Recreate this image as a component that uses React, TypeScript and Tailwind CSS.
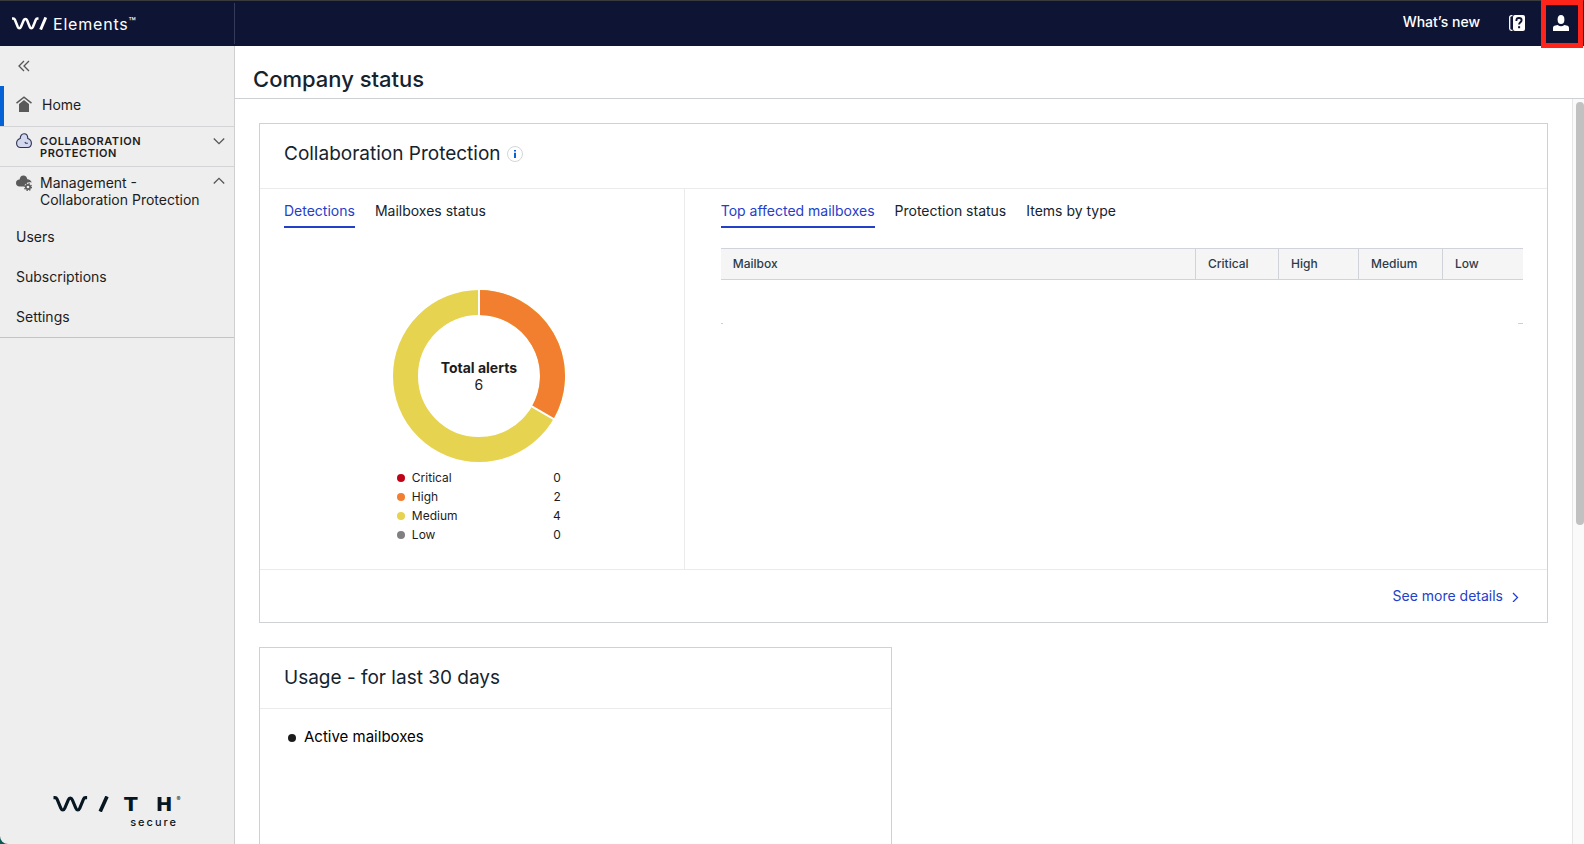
import React from "react";

const sidebarLinks = ["Users", "Subscriptions", "Settings"];

const severities = [
  { label: "Critical", count: 0, dot: "bg-[#c00418]" },
  { label: "High", count: 2, dot: "bg-[#f27f30]" },
  { label: "Medium", count: 4, dot: "bg-[#e6d34f]" },
  { label: "Low", count: 0, dot: "bg-[#808080]" },
];

function BrandMark({ className }: { className: string }) {
  return (
    <svg viewBox="0 0 56 16" className={className} fill="none" stroke="currentColor" strokeWidth="3.100" aria-hidden="true">
      <path d="M.5 1.600h1.400c1.100 0 1.700.5 2.200 1.500L7.800 12.200c1 2.400 3 2.400 4 0l3.500-8.400c.9-2.300 3.100-2.300 4 0l3.500 8.400c1 2.400 3 2.400 4 0l3.700-9.100c.4-1 1-1.500 2.100-1.500h1.500" />
      <path d="M54 .4 47.200 15.600" strokeWidth="3.600" />
    </svg>
  );
}

function HeaderMark() {
  return (
    <svg viewBox="0 0 36 13" className="h-[13px] w-9 text-white" fill="none" stroke="currentColor" strokeWidth="2.500" aria-hidden="true">
      <path d="M0 1.500h1.200c.9 0 1.400.4 1.700 1.200L5.700 9.800c.8 1.900 2.500 1.900 3.300 0l2.700-6.500c.8-1.900 2.600-1.900 3.400 0l2.600 6.500c.8 1.900 2.500 1.900 3.300 0L23.800 2.700c.3-.8.8-1.200 1.700-1.200h1" />
      <path d="M33.800.4 28.600 12.600" strokeWidth="2.900" />
    </svg>
  );
}

function Chevron({ d, className }: { d: string; className: string }) {
  return (
    <svg viewBox="0 0 12 12" className={className} fill="none" stroke="currentColor" strokeWidth="1.300" aria-hidden="true">
      <path d={d} />
    </svg>
  );
}

function TopBar() {
  return (
    <header className="flex h-[46px] shrink-0 border-t border-[#3a3a3c] bg-[#0e1433] text-white">
      <a href="#home" className="flex w-[234px] shrink-0 items-center gap-[5px] pl-3" aria-label="Elements home">
        <HeaderMark />
        <span className="flex items-start text-base leading-5 tracking-wider">
          Elements<span className="text-xs leading-4 tracking-normal">™</span>
        </span>
      </a>
      <div className="my-[2px] w-px bg-[#343a5c]" />
      <div className="flex flex-1 items-center justify-end">
        <a href="#news" className="mr-[29px] pb-1 text-sm font-medium">What’s new</a>
        <button type="button" aria-label="Help" className="mr-4 pb-px">
          <svg viewBox="0 0 16 16" className="size-4" aria-hidden="true">
            <path d="M3.500.7H2.400C1.400.7.700 1.400.7 2.400v11.200c0 1 .7 1.700 1.700 1.700h1.100" fill="none" stroke="#fff" strokeWidth="1.300" />
            <rect x="4" y="0" width="12" height="16" rx="2" fill="#fff" />
            <path d="M7.400 6V5.400c0-1.500 1.100-2.400 2.600-2.400s2.600.9 2.600 2.300c0 2-2.500 2-2.500 4.300" fill="none" stroke="#0e1433" strokeWidth="1.900" />
            <rect x="9.100" y="11.200" width="2" height="2" fill="#0e1433" />
          </svg>
        </button>
        <button type="button" aria-label="Account" className="relative mr-px flex h-full w-[42px] items-center justify-center pr-[2px] pb-px">
          <svg viewBox="0 0 16 16" className="size-4" fill="#fff" aria-hidden="true">
            <ellipse cx="8" cy="4.500" rx="3.400" ry="4.500" />
            <path d="M0 16v-2.800c0-1.600.9-2.300 2.400-2.600l2.300-.5c1.900 1.600 4.700 1.600 6.600 0l2.300.5c1.500.3 2.400 1 2.400 2.600V16z" />
          </svg>
          <span className="absolute inset-x-0 -top-px -bottom-[2px] border-[5px] border-[#ff2419]" />
        </button>
      </div>
    </header>
  );
}

function Sidebar() {
  return (
    <nav className="flex w-[235px] shrink-0 flex-col rounded-bl-[8px] border-r border-[#cfcfd2] bg-[#eeeeee] text-sm text-[#1c1c1c]">
      <button type="button" aria-label="Collapse menu" className="flex h-10 items-center pl-[18px] text-[#555555]">
        <svg viewBox="0 0 12 12" className="size-3" fill="none" stroke="currentColor" strokeWidth="1.300" aria-hidden="true">
          <path d="M6 1 1 6l5 5M11 1 6 6l5 5" />
        </svg>
      </button>
      <a href="#home" className="flex h-10 items-center gap-[10px] border-l-4 border-[#0562d6] pb-[2px] pl-3">
        <svg viewBox="0 0 16 18" className="h-[18px] w-4 text-[#5a5a5a]" aria-hidden="true">
          <path d="M.5 7.200 8 1.200l7.500 6" fill="none" stroke="currentColor" strokeWidth="1.500" />
          <path d="M8 4 13 8v8H3V8z" fill="currentColor" />
        </svg>
        Home
      </a>
      <button type="button" className="flex h-10 items-start border-t border-[#d4d4d6] pt-[6px] pr-[9px] pl-4 text-left">
        <svg viewBox="0 0 16 16" className="size-4 shrink-0" fill="#d3d8ee" stroke="#2c3250" strokeWidth="1.100" aria-hidden="true">
          <path d="M4.200 5.600C4.200 2.700 5.800.8 8 .8s3.800 1.900 3.800 4.800c2.200.7 3.600 2.300 3.600 4.700 0 2.600-1.600 4.200-4 4.200H4.600c-2.400 0-4-1.600-4-4.200 0-2.400 1.400-4 3.600-4.700z" />
          <path d="M8.800 9.200l1 1.100h2" fill="none" />
        </svg>
        <span className="ml-2 flex-1 pt-[2px] text-[11px] leading-3 font-semibold tracking-wider">COLLABORATION PROTECTION</span>
        <Chevron d="M.8 3.500 6 8.700l5.200-5.200" className="mt-[2px] size-3 text-[#555555]" />
      </button>
      <button type="button" className="flex h-[51px] items-start border-t border-[#d4d4d6] pt-[7px] pr-[9px] pl-4 text-left">
        <svg viewBox="0 0 16 16" className="mt-px size-4 shrink-0 text-[#5a5a5a]" aria-hidden="true">
          <path d="M3.600 4.500C3.800 2 5.300.4 7.400.4s3.700 1.600 3.900 3.800c2.300 0 3.900 1.400 4.400 3.400-3-1.300-6.800.2-7.700 4H3.600C1.400 11.600 0 10 0 8s1.400-3.500 3.600-3.500z" fill="currentColor" />
          <circle cx="12" cy="12" r="2.200" fill="none" stroke="currentColor" strokeWidth="1.700" />
          <circle cx="12" cy="12" r="3.500" fill="none" stroke="currentColor" strokeWidth="1.200" strokeDasharray="1.380 1.380" />
        </svg>
        <span className="ml-2 flex-1 leading-[17px]">Management - Collaboration Protection</span>
        <Chevron d="M.8 8.500 6 3.300l5.200 5.200" className="mt-px size-3 text-[#555555]" />
      </button>
      <ul className="border-b border-[#c4c4c6]">
        {sidebarLinks.map((link) => (
          <li key={link}>
            <a href={`#${link.toLowerCase()}`} className="flex h-10 items-center pl-4">{link}</a>
          </li>
        ))}
      </ul>
      <div className="mt-auto mb-[14px] ml-[53px] w-[131px] text-[#071722]">
        <div className="flex items-start">
          <BrandMark className="h-4 w-14" />
          <span className="ml-[15px] text-xl leading-4 font-bold [font-family:'DejaVu_Sans',sans-serif]">T</span>
          <span className="ml-[18px] text-xl leading-4 font-bold [font-family:'DejaVu_Sans',sans-serif]">H</span>
          <span className="ml-1 text-[6px] leading-[6px]">®</span>
        </div>
        <div className="mt-[2px] pr-[6px] text-right text-[11px] leading-4 font-medium tracking-[2px]">secure</div>
      </div>
    </nav>
  );
}

function Tabs({ label, items }: { label: string; items: string[] }) {
  return (
    <div role="tablist" aria-label={label} className="flex h-[39px] gap-5 text-sm">
      {items.map((item, i) => (
        <button
          key={item}
          type="button"
          role="tab"
          aria-selected={i === 0}
          className={
            i === 0
              ? "border-b-2 border-[#2540c8] pt-[7px] text-[#2540c8]"
              : "border-b-2 border-transparent pt-[7px] text-[#14232e]"
          }
        >
          {item}
        </button>
      ))}
    </div>
  );
}

function AlertsDonut() {
  return (
    <div className="mx-auto mt-[62px] w-[172px]">
      <div className="grid place-items-center">
        <svg viewBox="0 0 172 172" className="col-start-1 row-start-1 size-[172px]" fill="none" strokeWidth="25" aria-hidden="true">
          <circle cx="86" cy="86" r="73.500" stroke="#e6d34f" />
          <path d="M86 12.500A73.500 73.500 0 0 1 149.650 122.750" stroke="#f27f30" />
          <path d="M86 0v27M137.500 115.700l25 14.500" stroke="#fff" strokeWidth="2" />
        </svg>
        <div className="col-start-1 row-start-1 text-center text-sm leading-[17px] text-[#1c1c1c]">
          <div className="font-bold">Total alerts</div>
          <div>6</div>
        </div>
      </div>
      <ul className="mx-1 mt-[6px] text-xs leading-[19px] text-[#1c1c1c]">
        {severities.map((s) => (
          <li key={s.label} className="flex items-center">
            <span className={`mr-[7px] size-2 rounded-full ${s.dot}`} />
            <span className="flex-1">{s.label}</span>
            <span>{s.count}</span>
          </li>
        ))}
      </ul>
    </div>
  );
}

function MailboxTable() {
  const cell = "border-y border-[#d0d3d9] px-3 text-left font-medium";
  return (
    <div className="mt-5">
      <table className="w-full table-fixed border-separate border-spacing-0 bg-[#f5f5f5] text-xs text-[#2c3b4a]">
        <thead>
          <tr className="h-8">
            <th className={cell}>Mailbox</th>
            <th className={`${cell} w-[83px] border-l`}>Critical</th>
            <th className={`${cell} w-20 border-l`}>High</th>
            <th className={`${cell} w-[84px] border-l`}>Medium</th>
            <th className={`${cell} w-[81px] border-l`}>Low</th>
          </tr>
        </thead>
      </table>
      <div className="mt-[43px] flex justify-between">
        <span className="h-px w-[2px] bg-[#cfcfcf]" />
        <span className="h-px w-[5px] bg-[#cfcfcf]" />
      </div>
    </div>
  );
}

function ProtectionCard() {
  return (
    <section className="border border-[#cfd1d4]">
      <div className="flex items-center border-b border-[#ebebeb] px-6 pt-4 pb-5">
        <h2 className="text-[19px] leading-7 text-[#14232e]">Collaboration Protection</h2>
        <button type="button" aria-label="About collaboration protection" className="ml-[6px]">
          <svg viewBox="0 0 16 16" className="size-4" aria-hidden="true">
            <circle cx="8" cy="8" r="7.500" fill="#fff" stroke="#d5d5d5" />
            <path d="M7 4h2v1.500H7zM7 6.800h2V12H7z" fill="#0562d6" />
          </svg>
        </button>
      </div>
      <div className="flex min-h-[380px]">
        <div className="w-[33%] border-r border-[#ebebeb] pr-[10px] pl-6">
          <Tabs label="Alerts" items={["Detections", "Mailboxes status"]} />
          <AlertsDonut />
        </div>
        <div className="flex-1 pr-6 pl-9">
          <Tabs label="Mailboxes" items={["Top affected mailboxes", "Protection status", "Items by type"]} />
          <MailboxTable />
        </div>
      </div>
      <div className="flex h-[53px] items-center justify-end border-t border-[#ebebeb] pr-[26px]">
        <a href="#details" className="flex items-center gap-[6px] text-sm text-[#2540c8]">
          See more details
          <Chevron d="M4 3l4.500 4.500L4 12" className="size-3" />
        </a>
      </div>
    </section>
  );
}

function UsageCard() {
  return (
    <section className="min-h-[480px] border border-[#cfd1d4]">
      <h2 className="border-b border-[#ebebeb] px-6 py-4 text-[19px] leading-7 text-[#14232e]">Usage - for last 30 days</h2>
      <ul className="px-7 py-4">
        <li className="flex items-center gap-2 text-[15px] leading-6 text-black">
          <span className="mt-[2px] size-2 rounded-full bg-[#1c1c1c]" />
          Active mailboxes
        </li>
      </ul>
    </section>
  );
}

export default function App() {
  return (
    <div className="flex h-screen flex-col overflow-hidden bg-[#0b5a52] [font-family:Inter,'Liberation_Sans',sans-serif]">
      <TopBar />
      <div className="flex min-h-0 flex-1">
        <Sidebar />
        <div className="flex min-w-0 flex-1 flex-col bg-white">
          <div className="flex h-[53px] shrink-0 items-center border-b border-[#cfcfd6] px-[18px] pt-[14px]">
            <h1 className="text-[22px] leading-8 font-medium text-[#14232e]">Company status</h1>
          </div>
          <div className="flex min-h-0 flex-1">
            <main className="flex min-w-0 flex-1 flex-col gap-6 overflow-y-auto p-6 [scrollbar-width:none]">
              <ProtectionCard />
              <div className="grid grid-cols-2 gap-6">
                <UsageCard />
              </div>
            </main>
            <div className="flex w-3 justify-end border-l border-[#e6e6e6] bg-[#fafafa] pt-[3px]" aria-hidden="true">
              <div className="h-[57%] w-2 rounded-full bg-[#c1c1c1]" />
            </div>
          </div>
        </div>
      </div>
    </div>
  );
}
